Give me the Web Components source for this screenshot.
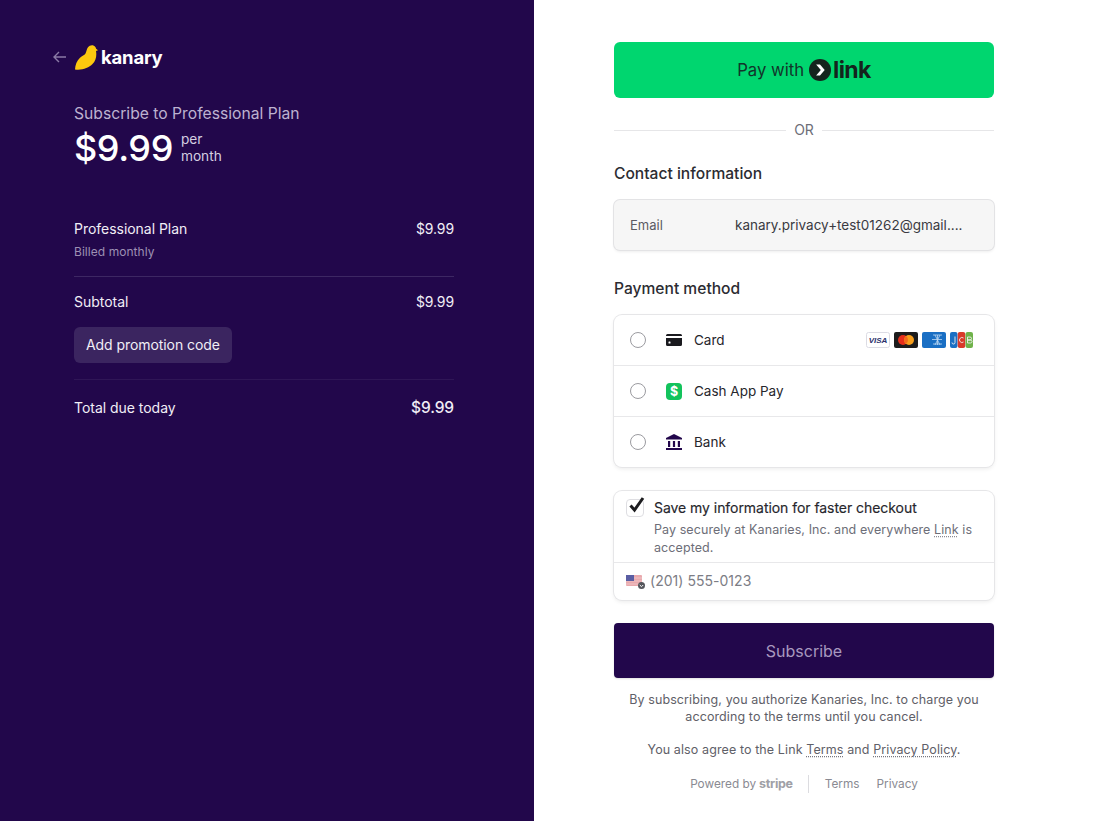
<!DOCTYPE html>
<html lang="en"><head><meta charset="utf-8"><title>Checkout</title>
<style>
html,body{margin:0;padding:0;height:100%;background:#fff}
body{font-family:Inter,"Liberation Sans",sans-serif;-webkit-font-smoothing:antialiased}
</style></head><body>
<checkout-page>
  <summary-panel slot="left">
    <line-row label="Professional Plan" value="$9.99" sub="Billed monthly"></line-row>
    <hr-line></hr-line>
    <line-row label="Subtotal" value="$9.99"></line-row>
    <promo-button>Add promotion code</promo-button>
    <hr-line faint></hr-line>
    <line-row label="Total due today" value="$9.99" big></line-row>
  </summary-panel>
  <payment-panel slot="right"></payment-panel>
</checkout-page>
<script>
function el(name, css, html){
  customElements.define(name, class extends HTMLElement{
    constructor(){super();this.attachShadow({mode:'open'});}
    connectedCallback(){
      const h = typeof html==='function'?html(this):html;
      this.shadowRoot.innerHTML='<style>'+css+'</style>'+h;
    }
  });
}
el('checkout-page',`:host{display:flex;min-height:821px;height:821px;overflow:hidden}
 .l{flex:0 0 534px;background:#22074b;display:flex}.r{flex:1;background:#fff;display:flex}`,
 `<div class="l"><slot name="left"></slot></div><div class="r"><slot name="right"></slot></div>`);

el('summary-panel',`:host{display:flex;flex-direction:column;box-sizing:border-box;width:534px;padding:43px 80px 0 74px;color:#fff}
 .top{display:flex;align-items:center;margin-left:-21px;height:28px}
 .top .arrow{display:block;width:13px;height:12px;margin-right:9px}
 .bird{display:block;width:23px;height:25px;margin-right:3px}
 .brand{font:700 18.500px/28px Inter,sans-serif;letter-spacing:-.2px;color:#fff;margin-top:-1px}
 .sub{margin-top:30px;font:400 15.700px/26px Inter,sans-serif;color:#bdb2d0}
 .price{display:flex;align-items:center;margin-top:-1px;height:44px}
 .amt{font:500 36px/44px Inter,sans-serif;letter-spacing:-.4px;margin-right:8px}
 .per{font:400 13.700px/17px Inter,sans-serif;color:#d5cfe0}
 .items{margin-top:49px}`,
 `<div class="top"><svg class="arrow" viewBox="0 0 13 12" fill="none" stroke="#8a7aa6" stroke-width="1.4"><path d="M13 6H1M6 1 1 6l5 5"/></svg>
   <svg class="bird" viewBox="0 0 23 25"><path fill="#fdc80e" d="M0 24.500C.2 20 1.800 15.800 5 12.800 7.200 10.700 9.300 10.400 10.500 8.500 11.500 6.800 11.500 4 13 2.200 14.300.6 16.800-.3 18.800.7c1.300.6 2 1.700 2.300 3l1.900 1.500-2 .9c.8 4.800.1 9.300-3.500 13C13.800 23 7 25.500 0 24.500z"/></svg>
   <span class="brand">kanary</span></div>
  <div class="sub">Subscribe to Professional Plan</div>
  <div class="price"><span class="amt">$9.99</span><span class="per">per<br>month</span></div>
  <div class="items"><slot></slot></div>`);

el('line-row',`:host{display:block;color:#f1eef6}
 .row{display:flex;justify-content:space-between;align-items:center;font:400 14px/20px Inter,sans-serif;letter-spacing:-.03px}
 .v{letter-spacing:-.1px}
 :host([big]) .v{font-size:15.500px;font-weight:500}
 .s{font:400 12px/16px Inter,sans-serif;color:#9d90b3;margin-top:5px;letter-spacing:.05px}`,
 h=>`<div class="row"><span>${h.getAttribute('label')}</span><span class="v">${h.getAttribute('value')}</span></div>`+
  (h.getAttribute('sub')?`<div class="s">${h.getAttribute('sub')}</div>`:''));

el('hr-line',`:host{display:block;height:1px;background:#3d2763;margin:16px 0 15px}
 :host([faint]){background:#2f1656;margin:16px 0 18px}`,``);

el('promo-button',`:host{display:inline-flex;align-items:center;height:36px;margin-top:15px;padding:0 12px;border-radius:6px;background:#3b2560;color:#f1eef6;font:400 14px/20px Inter,sans-serif;letter-spacing:-.07px}`,`<slot></slot>`);

el('pay-option',`:host{display:flex;align-items:center;height:51px;box-sizing:border-box;padding:0 21px 0 16px;font:400 13.500px/20px Inter,sans-serif;color:#26262c;border-top:1px solid #e8e8ea}
 :host(:first-child){border-top:0;height:50px}
 .radio{width:14px;height:14px;border:1px solid #9b9ba0;border-radius:50%;margin-right:19px;background:#fff}
 .ic{display:flex;width:18px;height:18px;align-items:center;justify-content:center;margin-right:11px}
 .t{flex:1}`,
 h=>`<span class="radio"></span><span class="ic"><slot name="icon"></slot></span><span class="t">${h.getAttribute('label')}</span><slot name="end"></slot>`);

el('card-brands',`:host{display:flex;gap:4px;align-items:center}
 svg{display:block;width:24px;height:16px}
 svg.j{width:23px}
 text{font-family:"Liberation Sans",sans-serif}`,
 `<svg viewBox="0 0 24 16"><rect x=".5" y=".5" width="23" height="15" rx="2" fill="#fff" stroke="#dcdce4"/><text x="12" y="11" font-size="8" font-weight="700" font-style="italic" text-anchor="middle" fill="#2a2f6b">VISA</text></svg>
  <svg viewBox="0 0 24 16"><rect width="24" height="16" rx="2" fill="#1c1c1c"/><circle cx="9" cy="8" r="5" fill="#e62e1b"/><circle cx="15" cy="8" r="5" fill="#f79e1b"/><path d="M12 4a5 5 0 0 1 0 8 5 5 0 0 1 0-8z" fill="#f26a1b"/></svg>
  <svg viewBox="0 0 24 16"><rect width="24" height="16" rx="2" fill="#1a6fc4"/><path d="M11 3h9M10 7.500h10M11 12h9M13 3l5 10M18 3l-5 10M15.500 3v10" stroke="#bcd8f3" stroke-width=".8" fill="none"/></svg>
  <svg class="j" viewBox="0 0 23 16"><rect x="0" y="0" width="7.500" height="16" rx="2" fill="#1a6fc4"/><rect x="7.750" y="0" width="7.500" height="16" rx="2" fill="#d93a2b"/><rect x="15.500" y="0" width="7.500" height="16" rx="2" fill="#6fb24a"/><path d="M5 4.500v6a1.500 1.500 0 0 1-3 0M13.500 6a2.500 2.500 0 1 0 0 4M17.500 5h2.500a1.400 1.400 0 0 1 0 3h-2.500h3a1.400 1.400 0 0 1 0 3h-3z" stroke="#f1f1f1" stroke-width=".9" fill="none"/></svg>`);

el('save-box',`:host{display:block;border-radius:8px;background:#fff;box-shadow:0 0 0 1px #e6e6e8,0 2px 4px rgba(0,0,0,.08);margin-top:24px;height:109px;color:#26262c}
 .top{display:flex;height:72px;box-sizing:border-box;padding:6px 12px 0 12px;border-bottom:1px solid #e8e8ea}
 .cb{position:relative;flex:none;width:18px;height:18px;border:1px solid #dedee2;border-radius:4px;margin:2px 10px 0 0;box-sizing:border-box;background:#fff}
 .cb svg{position:absolute;left:0;top:-5px;width:20px;height:20px}
 .txt{flex:1;min-width:0}
 .a{font:400 14px/20px Inter,sans-serif;margin-top:1px;letter-spacing:-.05px;-webkit-text-stroke:.15px #26262c}
 .b{font:400 12.500px/18px Inter,sans-serif;color:#6d6e78;margin-top:3px;letter-spacing:.08px}
 u{text-decoration:underline dotted #8a8a92;text-underline-offset:2px}
 .ph{display:flex;align-items:center;height:36px;padding:0 12px;font:400 14px/20px Inter,sans-serif;color:#7c7d85;letter-spacing:.03px}
 .fl{position:relative;width:20px;height:15px;margin-right:4px}
 .fl svg{display:block}`,
 `<div class="top"><span class="cb"><svg viewBox="0 0 20 20" fill="none" stroke="#1c1c1f" stroke-width="3"><path d="M3.500 10.500 7.500 15 16 3"/></svg></span>
   <div class="txt"><div class="a">Save my information for faster checkout</div>
   <div class="b">Pay securely at Kanaries, Inc. and everywhere <u>Link</u> is<br>accepted.</div></div></div>
  <div class="ph"><span class="fl"><svg width="20" height="15" viewBox="0 0 20 15"><rect y="1" width="16" height="11" rx="1" fill="#e9a9ad"/><path d="M0 4h16M0 7h16M0 10h16" stroke="#efc3c5" stroke-width="1"/><rect y="1" width="8" height="6" fill="#5a5ea3"/><circle cx="15.500" cy="11.500" r="3.500" fill="#55565c"/><path d="M13.800 11l1.700 1.700 1.700-1.700" stroke="#fff" stroke-width="1" fill="none"/></svg></span>(201) 555-0123</div>`);

el('payment-panel',`:host{display:flex;flex-direction:column;box-sizing:border-box;width:569px;padding:42px 0 0 80px;color:#1f1f24}
 .col{width:380px}
 .link{display:flex;align-items:center;justify-content:center;height:56px;background:#00d66f;border-radius:6px;font:400 16.700px/20px Inter,sans-serif;color:#12352a;gap:5px;box-sizing:border-box}
 .link svg{display:block;width:22px;height:22px}
 .lk{font:700 23px/26px Inter,sans-serif;letter-spacing:-.6px;color:#14241d;margin-left:-3px}
 .or{display:flex;align-items:center;gap:8px;margin-top:22px;font:400 14px/20px Inter,sans-serif;color:#6d6e78}
 .or i{flex:1;height:1px;background:#e6e6e8}
 h2{margin:22px 0 0;font:500 15.600px/24px Inter,sans-serif;color:#2c2c32}
 .email{display:flex;align-items:center;height:50px;margin-top:14px;box-sizing:border-box;padding:0 16px;background:#f6f6f6;border-radius:6px;box-shadow:0 0 0 1px #e3e3e5,0 2px 3px rgba(0,0,0,.07);font:400 13px/18px Inter,sans-serif;color:#5b5b63}
 .email b{flex:none;width:105px;font-weight:400}
 .email span{white-space:nowrap;font-size:13.500px;color:#3a3a42}
 .h3{margin-top:27px}
 .opts{margin-top:14px;border-radius:8px;box-shadow:0 0 0 1px #e6e6e8,0 2px 4px rgba(0,0,0,.08);background:#fff}
 .sub{display:flex;align-items:center;justify-content:center;height:55px;margin-top:23px;background:#22074b;border-radius:4px;color:#a898bf;font:400 16px/20px Inter,sans-serif;box-shadow:0 1px 2px rgba(0,0,0,.12)}
 p{margin:13px 0 0;text-align:center;font:400 12.500px/17px Inter,sans-serif;color:#5f6068;letter-spacing:.1px;padding:0 8px}
 p+p{margin-top:16px}
 u{text-decoration:underline dotted #77777f;text-underline-offset:2px}
 .foot{display:flex;align-items:center;justify-content:center;margin-top:16px;height:20px;font:400 11.800px/20px Inter,sans-serif;color:#8a8a92}
 .st{font:700 12.500px/20px Inter,sans-serif;letter-spacing:-.3px;color:#a0a0a6;margin-left:3px}
 .sep{width:1px;height:18px;background:#dcdce0;margin:0 16px 0 15px}
 .foot a{margin-right:17px}.foot a:last-child{margin-right:0}`,
 `<div class="col">
  <div class="link">Pay with <svg viewBox="0 0 21 21"><circle cx="10.500" cy="10.500" r="10.500" fill="#14241d"/><path d="M6.800 5.200h3.700l4.500 5.300-4.500 5.300H6.800l4.500-5.300z" fill="#fff"/></svg><span class="lk">link</span></div>
  <div class="or"><i></i>OR<i></i></div>
  <h2>Contact information</h2>
  <div class="email"><b>Email</b><span>kanary.privacy+test01262@gmail....</span></div>
  <h2 class="h3">Payment method</h2>
  <div class="opts">
   <pay-option label="Card"><svg slot="icon" width="16" height="12" viewBox="0 0 16 12"><path d="M0 1.500A1.500 1.500 0 0 1 1.500 0h13A1.500 1.500 0 0 1 16 1.500V2H0zM0 4h16v6.500a1.500 1.500 0 0 1-1.500 1.500h-13A1.500 1.500 0 0 1 0 10.500z" fill="#1a1a1f"/><rect x="2.500" y="7.500" width="2" height="2" rx=".5" fill="#fff"/></svg><card-brands slot="end"></card-brands></pay-option>
   <pay-option label="Cash App Pay"><svg slot="icon" width="16" height="17" viewBox="0 0 16 17"><rect width="16" height="17" rx="4" fill="#13c35c"/><text x="8" y="13" font-family="Inter,sans-serif" font-size="12.500" font-weight="700" text-anchor="middle" fill="#fff">$</text></svg></pay-option>
   <pay-option label="Bank"><svg slot="icon" width="16" height="16" viewBox="0 0 16 16" fill="#22074b"><path d="M8 0 16 4v1.500H0V4zM2 7h2.200v6H2zM6.900 7h2.200v6H6.900zM11.800 7H14v6h-2.200zM0 14h16v2H0z"/></svg></pay-option>
  </div>
  <save-box></save-box>
  <div class="sub">Subscribe</div>
  <p>By subscribing, you authorize Kanaries, Inc. to charge you according to the terms until you cancel.</p>
  <p>You also agree to the Link <u>Terms</u> and <u>Privacy Policy</u>.</p>
  <div class="foot"><span>Powered by</span><span class="st">stripe</span><span class="sep"></span><a>Terms</a><a>Privacy</a></div>
 </div>`);
</script>
</body></html>
